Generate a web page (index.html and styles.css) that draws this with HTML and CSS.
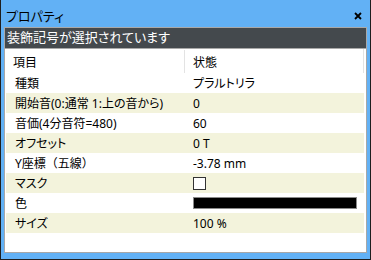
FILE: index.html
```html
<!DOCTYPE html>
<html>
<head>
    <title>プロパティ</title>
    <meta charset="utf-8">
    <link rel="stylesheet" href="styles.css">
</head>
<body>
    <div class="window">
        <div class="titlebar">
            <span class="title">プロパティ</span>
            <svg class="close" width="8" height="8" viewBox="0 0 8 8">
                <path d="M1 1 L7 7 M7 1 L1 7" stroke="#000" stroke-width="1.8"/>
            </svg>
        </div>
        <div class="status">装飾記号が選択されています</div>
        <div class="grid">
            <div class="row head">
                <div class="name">項目</div>
                <div class="value">状態</div>
            </div>
            <div class="row">
                <div class="name">種類</div>
                <div class="value">プラルトリラ</div>
            </div>
            <div class="row alt">
                <div class="name">開始音(0:通常 1:上の音から)</div>
                <div class="value">0</div>
            </div>
            <div class="row">
                <div class="name">音価(4分音符=480)</div>
                <div class="value">60</div>
            </div>
            <div class="row alt">
                <div class="name">オフセット</div>
                <div class="value">0 T</div>
            </div>
            <div class="row">
                <div class="name">Y座標<span class="full">（五線）</span></div>
                <div class="value">-3.78 mm</div>
            </div>
            <div class="row alt">
                <div class="name">マスク</div>
                <div class="value"><span class="checkbox"></span></div>
            </div>
            <div class="row">
                <div class="name">色</div>
                <div class="value"><span class="swatch"></span></div>
            </div>
            <div class="row alt">
                <div class="name">サイズ</div>
                <div class="value">100 %</div>
            </div>
        </div>
    </div>
</body>
</html>
```

FILE: styles.css
```css
/* General */
* {
    box-sizing: border-box;
}
body {
    margin: 0;
    font-family: "Noto Sans", "Noto Sans CJK JP", sans-serif;
    font-feature-settings: "palt";
    color: #000;
}

/* Window frame */
.window {
    width: 371px;
    height: 260px;
    display: flex;
    flex-direction: column;
    background: #62b1f5;
    border: 1px solid #1e1e1e;
    border-top: none;
    padding: 0 3px 6px 3px;
}
.titlebar {
    height: 27px;
    display: flex;
    align-items: center;
    justify-content: space-between;
    padding: 3px 5px 0 2px;
}
.title {
    font-size: 13px;
}
.close {
    display: block;
    margin-top: 1px;
}

/* Status line */
.status {
    height: 22px;
    background: #44494d;
    border: 1px solid #a9a9a9;
    color: #fff;
    font-size: 13px;
    line-height: 19px;
    padding-left: 2px;
}

/* Property grid */
.grid {
    flex: 1;
    background: #fff;
    border: 1px solid #a7a7a7;
    border-top: none;
    padding: 0 2px 0 1px;
    font-size: 12px;
}
.row {
    display: flex;
    height: 20px;
    align-items: center;
}
.row.alt {
    background: #f3f3dc;
}
.row .name {
    width: 179px;
    padding-left: 9px;
    white-space: nowrap;
}
.row .name .full {
    font-feature-settings: normal;
}
.row .value {
    flex: 1;
    padding-left: 8px;
    display: flex;
    align-items: center;
}
.row.head {
    height: 24px;
    padding-top: 1px;
    border-right: 1px solid #e3e3e3;
}
.row.head .name {
    padding-left: 7px;
    border-right: 1px solid #e3e3e3;
    height: 100%;
    display: flex;
    align-items: center;
}

.checkbox {
    width: 13px;
    height: 13px;
    border: 1px solid #333;
    background: #fff;
}
.swatch {
    width: 164px;
    height: 12px;
    background: #000;
    border: 1px solid #8a8a8a;
}
```
